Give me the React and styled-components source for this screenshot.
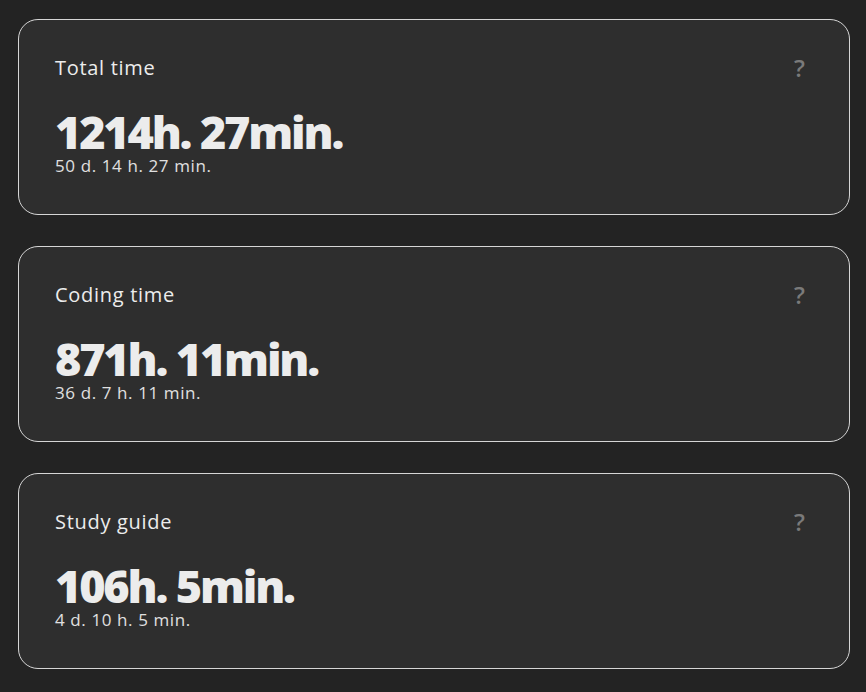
import React from "react";
import styled, { createGlobalStyle } from "styled-components";

const Global = createGlobalStyle`
  html, body { margin: 0; padding: 0; background: #232323; }
  body { font-family: "Open Sans", "Noto Sans", sans-serif; }
`;

const Page = styled.div`
  display: flex;
  flex-direction: column;
  gap: 31px;
  padding: 19px 16px 23px 18px;
  background: #232323;
  min-height: 692px;
  box-sizing: border-box;
`;

const Card = styled.section`
  height: 196px;
  box-sizing: border-box;
  border: 1px solid #d6d6d6;
  border-radius: 20px;
  background: #2e2e2e;
  padding: 34px 36px 0 36px;
  display: flex;
  flex-direction: column;
`;

const Header = styled.div`
  display: flex;
  justify-content: space-between;
  align-items: center;
`;

const Title = styled.h2`
  margin: 0;
  font-size: 20px;
  font-weight: 400;
  line-height: 28px;
  color: #ececec;
  letter-spacing: 0.7px;
`;

const Help = styled.span`
  font-size: 24px;
  font-weight: 600;
  color: #7a7a7a;
  line-height: 28px;
  margin-right: 8px;
`;

const Big = styled.div`
  margin-top: 29px;
  font-size: 45px;
  font-weight: 800;
  line-height: 42px;
  color: #ececec;
  letter-spacing: -2.2px;
`;

const Sub = styled.div`
  margin-top: 2px;
  font-size: 17px;
  font-weight: 400;
  line-height: 21px;
  color: #e0e0e0;
  letter-spacing: 0.6px;
`;

const items = [
  { title: "Total time", big: "1214h. 27min.", sub: "50 d. 14 h. 27 min." },
  { title: "Coding time", big: "871h. 11min.", sub: "36 d. 7 h. 11 min." },
  { title: "Study guide", big: "106h. 5min.", sub: "4 d. 10 h. 5 min." },
];

export default function App() {
  return (
    <>
      <Global />
      <Page>
        {items.map((it) => (
          <Card key={it.title}>
            <Header>
              <Title>{it.title}</Title>
              <Help>?</Help>
            </Header>
            <Big>{it.big}</Big>
            <Sub>{it.sub}</Sub>
          </Card>
        ))}
      </Page>
    </>
  );
}
